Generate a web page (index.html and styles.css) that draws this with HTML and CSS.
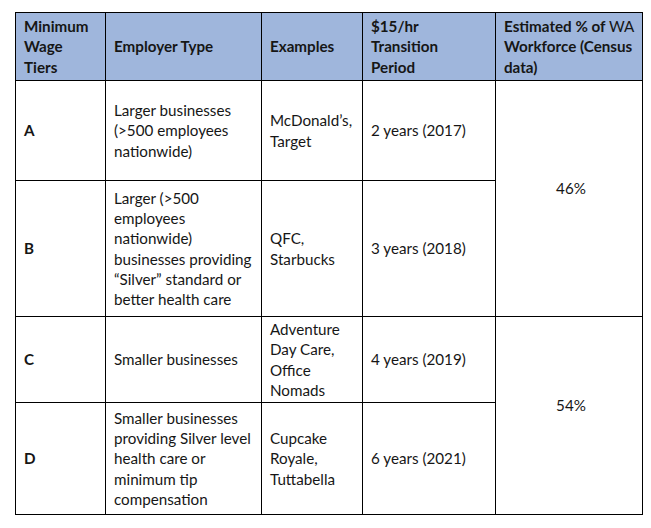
FILE: index.html
```html
<!DOCTYPE html>
<html>
<head>
<meta charset="utf-8">
<link rel="stylesheet" href="styles.css">
</head>
<body>
<table class="wage-table">
  <colgroup>
    <col class="c1"><col class="c2"><col class="c3"><col class="c4"><col class="c5">
  </colgroup>
  <thead>
    <tr class="r-head">
      <th>Minimum<br>Wage<br>Tiers</th>
      <th>Employer Type</th>
      <th>Examples</th>
      <th>$15/hr<br>Transition<br>Period</th>
      <th>Estimated % of <span class="reg">WA</span> Workforce (Census data)</th>
    </tr>
  </thead>
  <tbody>
    <tr class="r-a">
      <td class="tier">A</td>
      <td>Larger businesses (&gt;500 employees nationwide)</td>
      <td>McDonald’s, Target</td>
      <td>2 years (2017)</td>
      <td class="pct" rowspan="2">46%</td>
    </tr>
    <tr class="r-b">
      <td class="tier">B</td>
      <td>Larger (&gt;500 employees nationwide) businesses providing “Silver” standard or better health care</td>
      <td>QFC, Starbucks</td>
      <td>3 years (2018)</td>
    </tr>
    <tr class="r-c">
      <td class="tier">C</td>
      <td>Smaller businesses</td>
      <td>Adventure Day Care, Office Nomads</td>
      <td>4 years (2019)</td>
      <td class="pct" rowspan="2">54%</td>
    </tr>
    <tr class="r-d">
      <td class="tier">D</td>
      <td>Smaller businesses providing Silver level health care or minimum tip compensation</td>
      <td>Cupcake Royale, Tuttabella</td>
      <td>6 years (2021)</td>
    </tr>
  </tbody>
</table>
</body>
</html>
```
FILE: styles.css
```css
html, body {
  margin: 0;
  background: #ffffff;
}
body {
  padding: 12px 0 0 15px;
  font-family: Lato, "Liberation Sans", sans-serif;
  font-size: 15.2px;
  line-height: 20.3px;
  color: #161616;
}
.wage-table {
  border-collapse: collapse;
  table-layout: fixed;
  width: 627px;
}
.c1 { width: 90px; }
.c2 { width: 156px; }
.c3 { width: 101px; }
.c4 { width: 133px; }
.c5 { width: 147px; }
.wage-table th,
.wage-table td {
  border: 1px solid #000;
  padding: 0 4px 0 8px;
  vertical-align: middle;
  text-align: left;
}
.wage-table th {
  background: #9fb6dc;
  font-weight: bold;
}
.wage-table th .reg { font-weight: normal; }
.r-head { height: 68px; }
.r-a { height: 100px; }
.r-b { height: 136px; }
.r-c { height: 86px; }
.r-d { height: 112px; }
.tier { font-weight: bold; }
.pct {
  text-align: center !important;
  padding-bottom: 20px !important;
}
```
